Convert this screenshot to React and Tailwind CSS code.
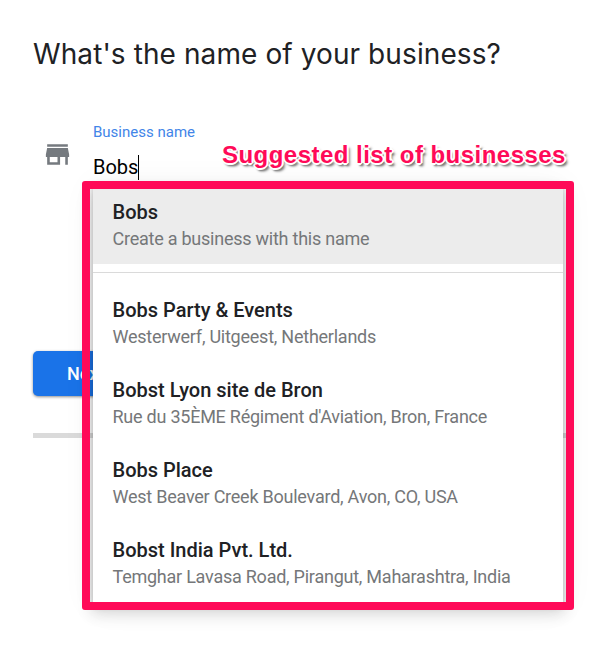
import React from 'react';
import { MdStore } from 'react-icons/md';
import clsx from 'clsx';

const businesses = [
  { name: 'Bobs Party & Events', address: 'Westerwerf, Uitgeest, Netherlands' },
  { name: 'Bobst Lyon site de Bron', address: "Rue du 35ÈME Régiment d'Aviation, Bron, France" },
  { name: 'Bobs Place', address: 'West Beaver Creek Boulevard, Avon, CO, USA' },
  { name: 'Bobst India Pvt. Ltd.', address: 'Temghar Lavasa Road, Pirangut, Maharashtra, India' },
];

export default function App() {
  return (
    <div className="relative w-[606px] h-[657px] overflow-hidden bg-white pl-[33px] pt-[34px] font-['Roboto',sans-serif]">
      <h1 className="h-10 text-[28px] leading-10 tracking-[0.09px] text-[#202124] whitespace-nowrap font-['Inter',sans-serif]">
        What's the name of your business?
      </h1>

      <div className="mt-12 flex h-[62px]">
        <StoreIcon />
        <div className="ml-5">
          <label className="block h-5 text-[15px] leading-5 text-[#4285e8]">Business name</label>
          <div className="mt-3 flex h-[26px] items-center text-[20px] leading-[26px] text-black">
            Bobs
            <span className="h-[25px] w-px bg-black" />
          </div>
        </div>
      </div>

      <button className="mt-[167px] block h-[45px] w-[112px] rounded-[5px] bg-[#1a73e8] pl-[34px] text-left text-[18px] font-medium text-white shadow-[0_1px_3px_rgba(0,0,0,0.45)]">
        Next
      </button>
      <div className="mt-[37px] h-[5px] w-[533px] bg-[#dadada]" />

      <Suggestions />

      <p className="absolute left-[222px] top-[141px] text-[24px] leading-7 font-bold tracking-[0.47px] text-[#ff0a58] whitespace-nowrap font-['Liberation_Sans',sans-serif] [text-shadow:-2px_0_#fff,2px_0_#fff,0_-2px_#fff,0_2px_#fff,-1px_-1px_#fff,1px_-1px_#fff,-1px_1px_#fff,1px_1px_#fff,2px_3px_2px_#777,3px_3px_3px_#999]">
        Suggested list of businesses
      </p>
    </div>
  );
}

function StoreIcon() {
  return <MdStore size={31} className="ml-[9px] mt-[17px] shrink-0 text-[#757a7f]" />;
}

function Suggestions() {
  return (
    <>
      <div className="absolute left-[93px] top-[184px] h-[420px] w-[470px] bg-white shadow-[0_8px_14px_2px_rgba(0,0,0,0.14),0_2px_32px_rgba(0,0,0,0.06),0_2px_6px_rgba(0,0,0,0.22)]">
        <Suggestion name="Bobs" address="Create a business with this name" active />
        <div className="mt-2 mb-[9px] h-px bg-[#dadada]" />
        {businesses.map((b) => (
          <Suggestion key={b.name} name={b.name} address={b.address} />
        ))}
      </div>
      {/* Highlight frame */}
      <div className="absolute left-[82px] top-[181px] h-[429px] w-[492px] rounded-[3px] border-8 border-[#ff0a58]" />
    </>
  );
}

function Suggestion({ name, address, active }) {
  return (
    <div className={clsx('h-20 pl-[19.5px] pt-[15px] whitespace-nowrap', active && 'bg-[#ececec]')}>
      <p className="text-[20px] leading-[26px] font-medium text-[#202124]">{name}</p>
      <p className="text-[18px] leading-7 tracking-[-0.24px] text-[#757779]">{address}</p>
    </div>
  );
}
